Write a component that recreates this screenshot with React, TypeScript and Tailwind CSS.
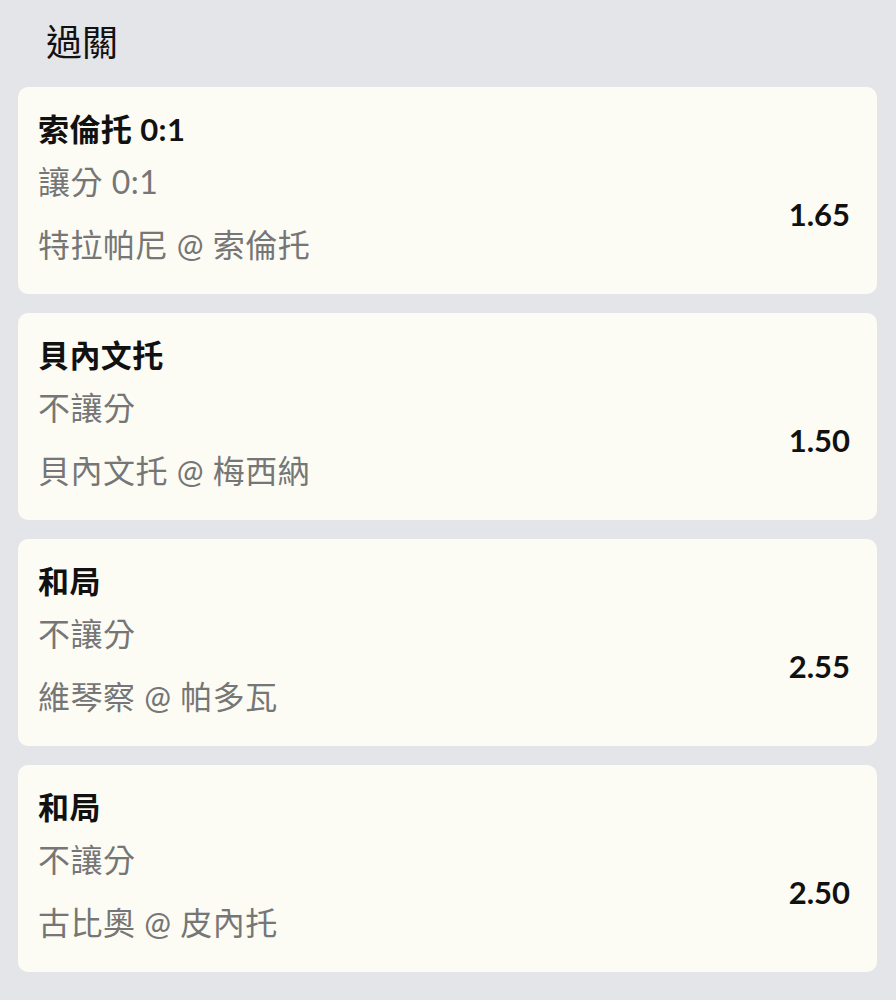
const items = [
  { title: "索倫托 0:1", type: "讓分 0:1", match: "特拉帕尼 @ 索倫托", odds: "1.65" },
  { title: "貝內文托", type: "不讓分", match: "貝內文托 @ 梅西納", odds: "1.50" },
  { title: "和局", type: "不讓分", match: "維琴察 @ 帕多瓦", odds: "2.55" },
  { title: "和局", type: "不讓分", match: "古比奧 @ 皮內托", odds: "2.50" },
];

export default function App() {
  return (
    <div className="min-h-[1000px] bg-[#e4e5e9] font-['Lato','Noto_Sans_CJK_TC',sans-serif]">
      <div className="h-[87px] pl-[46px] pt-5 text-[36px] leading-[44px] font-normal text-[#111]">過關</div>
      <div className="flex flex-col gap-[19px] pl-[18px] pr-[19px]">
        {items.map((it, i) => (
          <div key={i} className="rounded-[10px] bg-[#fcfcf4] pl-5 pr-[27px] pt-6 pb-[31px]">
            <div className="text-[31px] leading-[36px] font-bold tracking-[0.4px] text-[#111]">{it.title}</div>
            <div className="mt-[17px] flex items-center">
              <div className="flex-1 text-[32px] leading-[36px] tracking-[0.5px] text-[#767676]">
                <div>{it.type}</div>
                <div className="mt-[27px]">{it.match}</div>
              </div>
              <div className="text-[31px] leading-[36px] font-bold text-[#111]">{it.odds}</div>
            </div>
          </div>
        ))}
      </div>
    </div>
  );
}
